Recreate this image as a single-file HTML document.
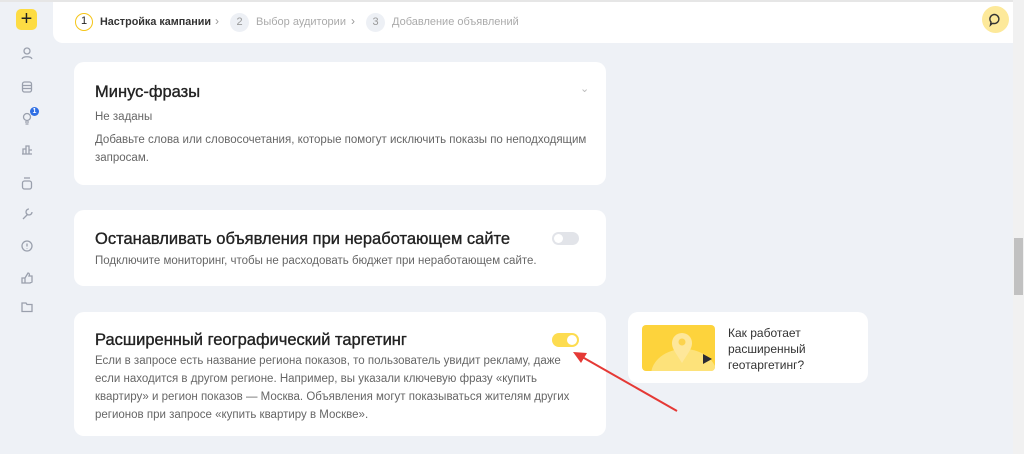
<!DOCTYPE html>
<html><head><meta charset="utf-8"><style>
*{margin:0;padding:0;box-sizing:border-box}
body{width:1024px;height:454px;overflow:hidden;background:#eef1f6;font-family:"Liberation Sans",sans-serif;position:relative;color:#222}
.abs{position:absolute}
.top{left:0;top:0;width:1013px;height:2px;background:#e6e6e6}
.hdr{left:53px;top:2px;width:960px;height:41px;background:#fff;border-radius:0 0 0 10px}
.card{background:#fff;border-radius:10px}
.h{font-size:16.5px;color:#222;-webkit-text-stroke:0.35px #222;white-space:nowrap}
.t{font-size:11.5px;color:#666;line-height:18px}
</style></head><body>
<div class="abs top"></div>
<div class="abs" style="left:16px;top:9px;width:21px;height:21px;background:#fddc43;border-radius:5px;font-size:20px;line-height:20px;text-align:center;color:#222">+</div>
<svg class="abs" style="left:18px;top:44px" width="20" height="270" fill="none" stroke="#9aa0ad" stroke-width="1.3">
<circle cx="9" cy="7" r="3"/><path d="M4 15c1-3 9-3 10 0"/>
<rect x="4.5" y="38" width="9" height="10" rx="2"/><path d="M4.5 41.5h9M4.5 44.5h9"/>
<circle cx="9" cy="73" r="3.5"/><path d="M7 78h4M7.5 80h3"/>
<path d="M4 110h10M5 110v-5h3v5M8 110v-8h3v8M11 110v-4h3"/>
<rect x="4.5" y="137" width="9" height="8" rx="2"/><path d="M6 134h6"/>
<path d="M5 175l5-5M11 165a3 3 0 1 0 3 3"/>
<circle cx="9" cy="202" r="5"/><path d="M9 199.5v3M9 204v.5"/>
<path d="M4 239h3v-5h-3zM7 234l3-5c1 0 2 1 1 3h3v6l-2 1h-5"/>
<path d="M4 259h4l1 1.5h5v7h-10z"/>
</svg>
<div class="abs" style="left:30px;top:107px;width:9px;height:9px;border-radius:50%;background:#2f6fe4;color:#fff;font-size:7px;line-height:9px;text-align:center;font-weight:bold">1</div>
<div class="abs hdr"></div>
<div class="abs" style="left:75px;top:13px;width:18px;height:18px;border:1.5px solid #f5c518;border-radius:50%;font-size:11px;line-height:15px;text-align:center">1</div>
<div class="abs" style="left:100px;top:16px;font-size:10.8px;font-weight:bold;color:#333;white-space:nowrap">Настройка кампании</div>
<div class="abs" style="left:215px;top:14px;font-size:12px;color:#999">›</div>
<div class="abs" style="left:230px;top:13px;width:19px;height:19px;background:#edf0f5;border-radius:50%;font-size:11px;line-height:19px;text-align:center;color:#999">2</div>
<div class="abs" style="left:256px;top:16px;font-size:11px;color:#aaa;white-space:nowrap">Выбор аудитории</div>
<div class="abs" style="left:351px;top:14px;font-size:12px;color:#999">›</div>
<div class="abs" style="left:366px;top:13px;width:19px;height:19px;background:#edf0f5;border-radius:50%;font-size:11px;line-height:19px;text-align:center;color:#999">3</div>
<div class="abs" style="left:392px;top:16px;font-size:11px;color:#aaa;white-space:nowrap">Добавление объявлений</div>
<div class="abs" style="left:982px;top:6px;width:27px;height:27px;border-radius:50%;background:#fde99a"></div>
<svg class="abs" style="left:988px;top:12px" width="15" height="15" fill="none" stroke="#333" stroke-width="1.4"><path d="M4 11.5l-1.5 1.5.5-3A4.5 4.5 0 1 1 6 11.5z"/></svg>
<div class="abs" style="left:1013px;top:0;width:11px;height:454px;background:#f1f1f1"></div>
<div class="abs" style="left:1014px;top:238px;width:9px;height:57px;background:#c1c1c1"></div>

<div class="abs card" style="left:74px;top:62px;width:532px;height:123px"></div>
<div class="abs h" style="left:95px;top:83px">Минус-фразы</div>
<div class="abs" style="left:580px;top:82px;color:#bbb;font-size:11px">⌄</div>
<div class="abs t" style="left:95px;top:108px">Не заданы</div>
<div class="abs t" style="left:95px;top:131px;width:500px">Добавьте слова или словосочетания, которые помогут исключить показы по неподходящим запросам.</div>

<div class="abs card" style="left:74px;top:210px;width:532px;height:76px"></div>
<div class="abs h" style="left:95px;top:230px">Останавливать объявления при неработающем сайте</div>
<div class="abs" style="left:552px;top:232px;width:27px;height:13px;background:#e2e4e9;border-radius:7px"><div style="position:absolute;left:2px;top:2px;width:9px;height:9px;border-radius:50%;background:#fff"></div></div>
<div class="abs t" style="left:95px;top:252px">Подключите мониторинг, чтобы не расходовать бюджет при неработающем сайте.</div>

<div class="abs card" style="left:74px;top:312px;width:532px;height:124px"></div>
<div class="abs h" style="left:95px;top:331px">Расширенный географический таргетинг</div>
<div class="abs" style="left:552px;top:333px;width:27px;height:14px;background:#fddc50;border-radius:7px"><div style="position:absolute;left:15px;top:2px;width:10px;height:10px;border-radius:50%;background:#fff"></div></div>
<div class="abs t" style="left:95px;top:352px;width:475px">Если в запросе есть название региона показов, то пользователь увидит рекламу, даже если находится в другом регионе. Например, вы указали ключевую фразу «купить квартиру» и регион показов — Москва. Объявления могут показываться жителям других регионов при запросе «купить квартиру в Москве».</div>

<div class="abs card" style="left:628px;top:312px;width:240px;height:71px"></div>
<svg class="abs" style="left:642px;top:325px" width="73" height="46"><defs><clipPath id="c"><rect width="73" height="46" rx="4"/></clipPath></defs><g clip-path="url(#c)"><rect width="73" height="46" fill="#fdd33c"/><ellipse cx="42" cy="50" rx="33" ry="26" fill="#fde27a"/><path d="M40 38c-6-10-10-14-10-20a10 10 0 0 1 20 0c0 6-4 10-10 20z" fill="#fee79a"/><circle cx="40" cy="17" r="3.5" fill="#fcd34d"/><path d="M61 29l9 5-9 5z" fill="#2b2b33"/></g></svg>
<div class="abs" style="left:728px;top:325px;font-size:12px;line-height:16px;color:#333">Как работает<br>расширенный<br>геотаргетинг?</div>

<svg class="abs" style="left:560px;top:340px" width="130" height="80"><path d="M117 71L17 14" stroke="#e53935" stroke-width="2"/><path d="M13 12l14 1-6 10z" fill="#e53935"/></svg>
</body></html>
